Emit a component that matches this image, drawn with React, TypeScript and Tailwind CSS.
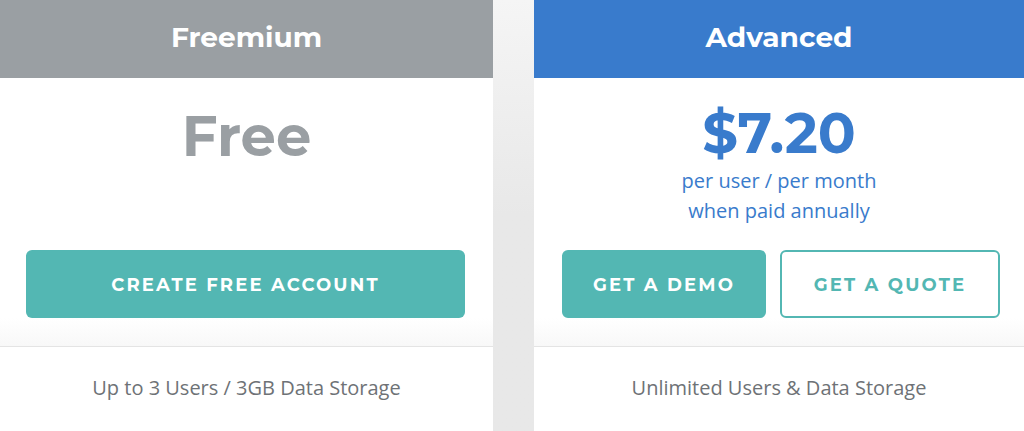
import React from "react";

const head = "font-['Montserrat','Open_Sans',sans-serif]";
const body = "font-['Open_Sans','Noto_Sans',sans-serif]";

export default function App() {
  return (
    <div className="flex w-[1024px] h-[431px] overflow-hidden bg-[#e8e8e8]">
      {/* Left card */}
      <div className="w-[493px] shrink-0 flex flex-col bg-white">
        <div className={`h-[78px] bg-[#9a9fa3] flex items-center justify-center pb-[5px] text-white text-[28px] font-bold ${head}`}>
          Freemium
        </div>
        <div className="h-[172px] flex justify-center pt-[18px]">
          <div className={`text-[56px] leading-[80px] font-bold text-[#9a9fa3] ${head}`}>Free</div>
        </div>
        <div className="pl-[26px] pr-[28px]">
          <button className={`w-full h-[68px] rounded-[6px] bg-[#53b7b3] text-white text-[18px] font-bold tracking-[0.12em] pt-[2px] ${head}`}>
            CREATE FREE ACCOUNT
          </button>
        </div>
        <div className="h-[29px] bg-gradient-to-b from-white to-[#f8f8f8] border-b border-[#e4e4e4]" />
        <div className={`flex-1 flex justify-center pt-[26px] text-[20px] text-[#6e7276] ${body}`}>
          Up to 3 Users / 3GB Data Storage
        </div>
      </div>
      <div className="w-[41px] shrink-0 bg-gradient-to-b from-[#f5f5f5] via-[#e8e8e8] to-[#e8e8e8]" />
      {/* Right card */}
      <div className="flex-1 flex flex-col bg-white">
        <div className={`h-[78px] bg-[#397bcc] flex items-center justify-center pb-[5px] text-white text-[28px] font-bold ${head}`}>
          Advanced
        </div>
        <div className="h-[172px] flex flex-col items-center pt-[22px] text-[#397bcc]">
          <div className={`text-[56px] leading-[66px] font-bold ${head}`}>$7.20</div>
          <div className={`text-[20px] leading-[30px] ${body}`}>per user / per month</div>
          <div className={`text-[20px] leading-[30px] ${body}`}>when paid annually</div>
        </div>
        <div className="flex pl-[28px] gap-[14px]">
          <button className={`w-[204px] h-[68px] rounded-[6px] bg-[#53b7b3] text-white text-[18px] font-bold tracking-[0.12em] pt-[2px] ${head}`}>
            GET A DEMO
          </button>
          <button className={`w-[220px] h-[68px] rounded-[6px] border-2 border-[#53b7b3] bg-white text-[#53b7b3] text-[18px] font-bold tracking-[0.12em] pt-[2px] ${head}`}>
            GET A QUOTE
          </button>
        </div>
        <div className="h-[29px] bg-gradient-to-b from-white to-[#f8f8f8] border-b border-[#e4e4e4]" />
        <div className={`flex-1 flex justify-center pt-[26px] text-[20px] text-[#6e7276] ${body}`}>
          Unlimited Users &amp; Data Storage
        </div>
      </div>
    </div>
  );
}
